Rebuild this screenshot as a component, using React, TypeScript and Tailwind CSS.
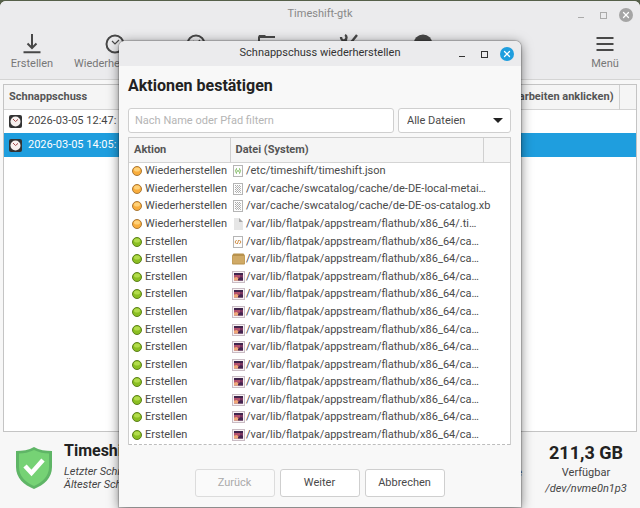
import React from 'react';
import { X } from 'lucide-react';

type FileIcon = 'json' | 'binary' | 'plain' | 'xml' | 'folder' | 'image';

interface FileEntry {
  action: 'Wiederherstellen' | 'Erstellen';
  icon: FileIcon;
  path: string;
}

const APPSTREAM = '/var/lib/flatpak/appstream/flathub/x86_64/';

const entries: FileEntry[] = [
  { action: 'Wiederherstellen', icon: 'json', path: '/etc/timeshift/timeshift.json' },
  { action: 'Wiederherstellen', icon: 'binary', path: '/var/cache/swcatalog/cache/de-DE-local-metai…' },
  { action: 'Wiederherstellen', icon: 'binary', path: '/var/cache/swcatalog/cache/de-DE-os-catalog.xb' },
  { action: 'Wiederherstellen', icon: 'plain', path: APPSTREAM + '.ti…' },
  { action: 'Erstellen', icon: 'xml', path: APPSTREAM + 'ca…' },
  { action: 'Erstellen', icon: 'folder', path: APPSTREAM + 'ca…' },
  ...Array.from({ length: 10 }, (): FileEntry => ({ action: 'Erstellen', icon: 'image', path: APPSTREAM + 'ca…' })),
];

const snapshots = [
  { date: '2026-03-05 12:47:', selected: false },
  { date: '2026-03-05 14:05:', selected: true },
];

const FileTypeIcon: React.FC<{ type: FileIcon }> = ({ type }) => {
  if (type === 'folder') {
    return (
      <svg viewBox="0 0 13 12" className="w-[13px] h-3 shrink-0">
        <path d="M1.500 .5h10L13 2.500v8a1 1 0 0 1-1 1H1a1 1 0 0 1-1-1v-8z" fill="#b8924d" />
        <path d="M.5 3h12v7.500H.5z" fill="#d0aa66" />
      </svg>
    );
  }
  if (type === 'image') {
    return (
      <svg viewBox="0 0 13 12" className="w-[13px] h-3 shrink-0">
        <rect x="0.5" y="0.5" width="12" height="11" fill="#f7f2f4" stroke="#c9bcc4" />
        <rect x="2" y="2" width="9" height="7.500" fill="#7a3560" />
        <path d="M2 2h9v2H2z" fill="#40244c" />
        <path d="M2 4h6v2.500H2z" fill="#b4506c" />
        <path d="M2 6.500l3-.5 2 2v1.500H2z" fill="#f0a878" />
        <path d="M6 8l3-2 2 1v2.500H6z" fill="#452650" />
      </svg>
    );
  }
  if (type === 'plain') {
    return (
      <svg viewBox="0 0 13 12" className="w-[13px] h-3 shrink-0">
        <path d="M2 0h5l4 4v8H2z" fill="#e6e6e6" />
        <path d="M7 0l4 4H7z" fill="#a9a9a9" />
      </svg>
    );
  }
  return (
    <svg viewBox="0 0 13 12" className="w-[13px] h-3 shrink-0">
      <rect x="1.5" y="0.5" width="9" height="11" fill="#fdfdfd" stroke="#b5b5b5" />
      {type === 'json' && (
        <g fill="none" stroke="#5aa834">
          <path d="M5 3.5c-1.200 0-.6 2-1.600 2.400 1 .4.4 2.600 1.600 2.600M7 3.500c1.200 0 .6 2 1.600 2.400-1 .4-.4 2.600-1.600 2.600" />
          <path d="M6 5v2" />
        </g>
      )}
      {type === 'xml' && (
        <path d="M4.6 4L3 6l1.600 2M7.400 4L9 6 7.400 8M6.600 4L5.400 8" fill="none" stroke="#d09048" />
      )}
      {type === 'binary' && (
        <g fill="none" stroke="#a8a8a8" strokeDasharray="1 1">
          <path d="M3 2.500h6M3 4.500h6M3 6.500h6M3 8.500h6" />
          <path d="M4 3.500h5M4 5.500h5M4 7.500h5M4 9.500h5" stroke="#b8b8b8" />
        </g>
      )}
    </svg>
  );
};

const StatusDot: React.FC<{ create: boolean }> = ({ create }) => (
  <svg viewBox="0 0 10 10" className="w-[10px] h-[10px] shrink-0">
    <circle cx="5" cy="5" r="4.500" fill={create ? '#8bbf22' : '#f9ad3c'} stroke={create ? '#5c7f1c' : '#a87838'} />
    <ellipse cx="5" cy="3.400" rx="3" ry="2" fill={create ? '#b3dc4c' : '#ffd27a'} />
  </svg>
);

const SnapshotIcon = () => (
  <svg viewBox="0 0 13 13" className="w-[13px] h-[13px] shrink-0">
    <rect width="13" height="13" rx="2" fill="#333" />
    <circle cx="6.500" cy="6.500" r="5" fill="#f6f0ee" />
    <path d="M4 4l2.500 2.500L9 4.400" fill="none" stroke="#a34a4a" />
  </svg>
);

const ClockIcon = () => (
  <svg viewBox="0 0 20 20" className="w-5 h-5" fill="none" stroke="#484848" strokeWidth="2">
    <circle cx="10" cy="10" r="8.500" />
    <path d="M7 7l3 3 4-4" strokeWidth="1.200" />
  </svg>
);

const toolbarItems = [
  {
    title: 'Schnappschuss erstellen',
    label: 'Erstellen',
    width: 'w-[58px]',
    icon: (
      <svg viewBox="0 0 20 20" className="w-5 h-5" fill="none" stroke="#484848" strokeWidth="2">
        <path d="M10 0v14M5.500 9.500L10 14l4.500-4.500M1.500 18.200h17" />
      </svg>
    ),
  },
  { title: 'Schnappschuss wiederherstellen', label: 'Wiederherstellen', width: 'w-[108px]', icon: <ClockIcon /> },
  { title: 'Schnappschuss löschen', width: 'w-[54px]', icon: <ClockIcon /> },
  {
    title: 'Schnappschuss durchsuchen',
    width: 'w-[88px]',
    icon: (
      <svg viewBox="0 0 20 20" className="w-5 h-5" fill="#484848">
        <path d="M1 3l1-2h6l1 1h9v2H3v3H1zM3 7h17l-2 11H1z" />
      </svg>
    ),
  },
  {
    title: 'Einstellungen',
    width: 'w-[76px]',
    icon: (
      <svg viewBox="0 0 20 20" className="w-5 h-5" fill="none" stroke="#484848" strokeWidth="2.400">
        <path d="M2 3c0 3 2 4 4 3 2-1 2-4 0-5M6 6l11 12M18 1l-4 5L3 18" />
      </svg>
    ),
  },
  {
    title: 'Assistent',
    width: 'w-[72px]',
    icon: (
      <svg viewBox="0 0 20 20" className="w-5 h-5">
        <circle cx="10" cy="10" r="9.500" fill="#484848" />
        <path d="M10 9v6" stroke="#eee" strokeWidth="2" />
      </svg>
    ),
  },
];

const WindowControls: React.FC<{ active?: boolean }> = ({ active }) => (
  <div className={`absolute right-[7px] inset-y-0 flex items-center gap-[10px] ${active ? 'text-[#333]' : 'text-[#aaa]'}`}>
    <button aria-label="Minimieren">
      <svg viewBox="0 0 12 12" className="w-3 h-3" stroke="currentColor">
        <path d="M3 8.500h6" />
      </svg>
    </button>
    <button aria-label="Maximieren">
      <svg viewBox="0 0 12 12" className="w-3 h-3" fill="none" stroke="currentColor">
        <rect x="3.500" y="3.500" width="6" height="6" />
      </svg>
    </button>
    <button
      aria-label="Schließen"
      className={`w-[14px] h-[14px] rounded-full flex items-center justify-center text-white ${active ? 'bg-[#1f9ede]' : 'bg-[#a5a5a5]'}`}
    >
      <X className="w-[10px] h-[10px]" strokeWidth={3} />
    </button>
  </div>
);

const Toolbar = () => (
  <nav className="flex items-start px-[3px] pt-1.5 pb-[7px] border-b border-[#d4d4d4] bg-[#ebebed] text-[11px] leading-4 text-[#777]">
    {toolbarItems.map((item) => (
      <button key={item.title} title={item.title} className={`${item.width} shrink-0 flex flex-col items-center gap-0.5`}>
        {item.icon}
        {item.label}
      </button>
    ))}
    <button className="ml-auto w-16 flex flex-col items-center gap-0.5">
      <svg viewBox="0 0 20 20" className="w-5 h-5" stroke="#484848" strokeWidth="2">
        <path d="M1.500 4h17M1.500 10h17M1.500 16h17" />
      </svg>
      Menü
    </button>
  </nav>
);

const SnapshotTable = () => (
  <div className="flex-1 mx-[3px] mt-1 border border-[#c4c4c4] bg-white">
    <table className="w-full text-[11px] leading-4 text-[#444]">
      <thead>
        <tr className="h-6 bg-[#f5f5f5] border-b border-[#d4d4d4] text-[#555]">
          <th className="px-[5px] text-left font-bold">Schnappschuss</th>
          <th className="px-[5px] text-right font-bold border-r border-[#d0d0d0]">(zum Bearbeiten anklicken)</th>
          <th className="w-[17px]" />
        </tr>
      </thead>
      <tbody>
        {snapshots.map((snapshot) => (
          <tr key={snapshot.date} className={`h-6 ${snapshot.selected ? 'bg-[#1f9ede] text-white' : ''}`}>
            <td className="px-[5px]">
              <div className="flex items-center gap-1.5">
                <SnapshotIcon />
                {snapshot.date}
              </div>
            </td>
            <td />
            <td />
          </tr>
        ))}
      </tbody>
    </table>
  </div>
);

const StatusBar = () => (
  <footer className="h-[76px] flex items-start pl-4 pr-[14px] pt-[9px] text-[#444]">
    <svg viewBox="0 0 36 42" className="w-9 h-[42px] mt-1.5 shrink-0">
      <path d="M18 0C13 3 6 4 0 4v16c0 11 8 18 18 22 10-4 18-11 18-22V4C30 4 23 3 18 0z" fill="#5fb566" />
      <path d="M18 3C13 5.500 8 6.500 3 6.500V20c0 9 6.500 15.500 15 19 8.500-3.500 15-10 15-19V6.500C28 6.500 23 5.500 18 3z" fill="#76d275" />
      <path d="M9 19l6.500 7L27 13" fill="none" stroke="#fff" strokeWidth="4.500" />
    </svg>
    <div className="ml-3">
      <h2 className="text-[16px] leading-5 font-bold text-[#222]">Timeshift ist aktiv</h2>
      <p className="mt-1 text-[11px] leading-[13px] italic">
        Letzter Schnappschuss
        <br />
        Ältester Schnappschuss
      </p>
    </div>
    <div className="ml-auto text-[11px] leading-4 pt-6">Schnappschüsse</div>
    <div className="ml-6 w-20 flex flex-col items-center text-[11px] leading-4">
      <div className="text-[18px] leading-6 font-bold text-[#222] whitespace-nowrap">211,3 GB</div>
      <div>Verfügbar</div>
      <div className="italic">/dev/nvme0n1p3</div>
    </div>
  </footer>
);

const RestoreDialog = () => (
  <section
    role="dialog"
    aria-label="Schnappschuss wiederherstellen"
    className="absolute top-[41px] inset-x-0 mx-auto w-[402px] rounded-t-md bg-[#f8f8f8] shadow-[0_2px_12px_rgba(0,0,0,0.5),0_0_1px_1px_rgba(0,0,0,0.2)]"
  >
    <header className="relative h-[25px] flex items-center justify-center rounded-t-md bg-[#ebebed] text-[11px] text-[#333]">
      Schnappschuss wiederherstellen
      <WindowControls active />
    </header>
    <div className="pl-[9px] pr-[10px] pt-2 pb-[10px] text-[11px] leading-4 text-[#4a4a4a]">
      <h1 className="text-[16px] leading-6 font-bold text-[#222]">Aktionen bestätigen</h1>
      <div className="flex gap-1 mt-2.5">
        <input
          type="text"
          aria-label="Nach Name oder Pfad filtern"
          placeholder="Nach Name oder Pfad filtern"
          className="flex-1 min-w-0 h-[25px] px-1.5 rounded-[3px] border border-[#cfcfcf] bg-white placeholder:text-[#b5b5b5]"
        />
        <div className="relative w-[113px]">
          <select
            aria-label="Dateien"
            className="w-full h-[25px] pl-2 pr-6 rounded-[3px] border border-[#cfcfcf] bg-white appearance-none"
          >
            <option>Alle Dateien</option>
          </select>
          <svg viewBox="0 0 10 5" className="absolute right-2 top-[10px] w-[10px] h-[5px] pointer-events-none">
            <path d="M0 0h10L5 5z" fill="#222" />
          </svg>
        </div>
      </div>
      <div className="mt-1 border border-[#cdcdcd] border-b-0 bg-white">
        <table className="w-full h-[306px] table-fixed">
          <colgroup>
            <col className="w-[101px]" />
            <col />
            <col className="w-[27px]" />
          </colgroup>
          <thead>
            <tr className="h-6 bg-[#f5f5f5] border-b border-[#d4d4d4] text-[#555]">
              <th className="px-[5px] text-left font-bold border-r border-[#d0d0d0]">Aktion</th>
              <th className="px-[5px] text-left font-bold border-r border-[#d0d0d0]">Datei (System)</th>
              <th />
            </tr>
          </thead>
          <tbody>
            {entries.map((entry, i) => (
              <tr key={i}>
                <td className="pl-[3px]">
                  <div className="flex items-center gap-[3px]">
                    <StatusDot create={entry.action === 'Erstellen'} />
                    {entry.action}
                  </div>
                </td>
                <td className="pl-0.5">
                  <div className="flex items-center gap-px whitespace-nowrap">
                    <FileTypeIcon type={entry.icon} />
                    {entry.path}
                  </div>
                </td>
                <td />
              </tr>
            ))}
          </tbody>
        </table>
        <div className="border-b border-dashed border-[#bdbdbd]" />
      </div>
      <div className="flex justify-center gap-[5px] mt-6">
        <button disabled className="w-20 h-7 rounded-[3px] border border-[#dcdcdc] bg-[#fafafa] text-[#aaa]">
          Zurück
        </button>
        <button className="w-20 h-7 rounded-[3px] border border-[#cfcfcf] bg-white">Weiter</button>
        <button className="w-20 h-7 rounded-[3px] border border-[#cfcfcf] bg-white">Abbrechen</button>
      </div>
    </div>
  </section>
);

const App = () => {
  return (
    <div className="relative min-h-screen pt-px overflow-hidden bg-[#56604a] font-['Roboto','Noto_Sans',sans-serif]">
      <main className="min-h-[507px] flex flex-col rounded-t-md overflow-hidden bg-[#f7f7f7]">
        <header className="relative h-[27px] flex items-center justify-center bg-[#ebebed] text-[11px] text-[#888]">
          Timeshift-gtk
          <WindowControls />
        </header>
        <Toolbar />
        <SnapshotTable />
        <StatusBar />
      </main>
      <RestoreDialog />
    </div>
  );
};

export default App;
